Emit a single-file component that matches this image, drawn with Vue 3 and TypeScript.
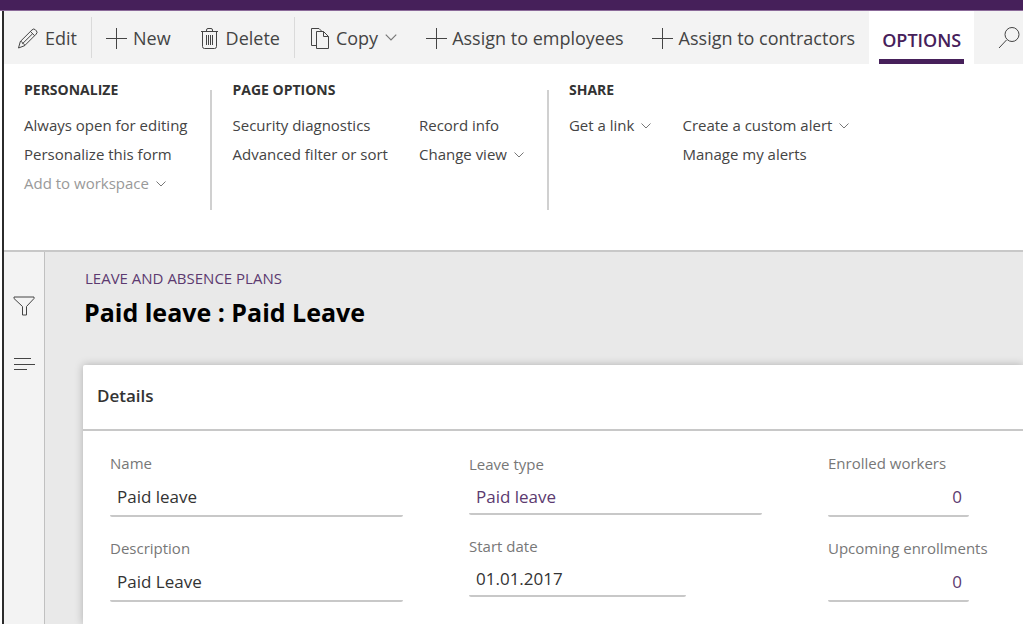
<script setup lang="ts">
import { ref } from 'vue'

interface OptionItem {
  label: string
  menu?: boolean
  disabled?: boolean
}

interface OptionGroup {
  title: string
  key: string
  columns: OptionItem[][]
}

interface Field {
  id: string
  label: string
  value: string
  size: 'full' | 'date' | 'count'
  accent?: boolean
}

interface FieldColumn {
  compact?: boolean
  fields: Field[]
}

const groups: OptionGroup[] = [
  {
    title: 'PERSONALIZE',
    key: 'personalize',
    columns: [
      [
        { label: 'Always open for editing' },
        { label: 'Personalize this form' },
        { label: 'Add to workspace', menu: true, disabled: true },
      ],
    ],
  },
  {
    title: 'PAGE OPTIONS',
    key: 'page',
    columns: [
      [{ label: 'Security diagnostics' }, { label: 'Advanced filter or sort' }],
      [{ label: 'Record info' }, { label: 'Change view', menu: true }],
    ],
  },
  {
    title: 'SHARE',
    key: 'share',
    columns: [
      [{ label: 'Get a link', menu: true }],
      [{ label: 'Create a custom alert', menu: true }, { label: 'Manage my alerts' }],
    ],
  },
]

const fieldColumns = ref<FieldColumn[]>([
  {
    fields: [
      { id: 'name', label: 'Name', value: 'Paid leave', size: 'full' },
      { id: 'description', label: 'Description', value: 'Paid Leave', size: 'full' },
    ],
  },
  {
    compact: true,
    fields: [
      { id: 'leave-type', label: 'Leave type', value: 'Paid leave', size: 'full', accent: true },
      { id: 'start-date', label: 'Start date', value: '01.01.2017', size: 'date' },
    ],
  },
  {
    fields: [
      { id: 'enrolled', label: 'Enrolled workers', value: '0', size: 'count', accent: true },
      { id: 'upcoming', label: 'Upcoming enrollments', value: '0', size: 'count', accent: true },
    ],
  },
])
</script>

<template>
  <div class="app">
    <div class="topbar"></div>
    <div class="window">
      <nav class="toolbar" aria-label="Actions">
        <button type="button" class="action">
          <svg class="icon" viewBox="0 0 20 20">
            <path d="M.5 20l1.800-6.500L14 1.900a2.400 2.400 0 0 1 3.500 0l.7.7a2.400 2.400 0 0 1 0 3.500L6.600 17.700z" />
            <path d="M12.400 3.500l4.200 4.200M14.600 5.700L4.700 15.500M2.300 13.500c1.600 0 2.300.6 2.300 2 1.300 0 2 .7 2 2.200" />
          </svg>
          <span>Edit</span>
        </button>
        <i class="divider"></i>
        <button type="button" class="action">
          <svg class="icon" viewBox="0 0 20 20"><path d="M10.500 0v21M0 10.500h21" /></svg>
          <span>New</span>
        </button>
        <button type="button" class="action">
          <svg class="icon" viewBox="0 0 20 20">
            <path d="M2 3.500h17M7.500 3.500v-1.500q0-1.500 1.500-1.500h3q1.500 0 1.500 1.500v1.500M3.500 3.500v15q0 2 2 2h10q2 0 2-2v-15M7.500 7v10M9.500 7v10M11.500 7v10M13.500 7v10" />
          </svg>
          <span>Delete</span>
        </button>
        <i class="divider"></i>
        <button type="button" class="action">
          <svg class="icon" viewBox="0 0 20 20">
            <path d="M7.500 17.500h-5v-17h7.500l3.500 3.500M7.500 3.500h7l5 5v12h-12zM14.500 3.500v5h5" />
          </svg>
          <span>Copy</span>
          <svg class="chevron" viewBox="0 0 10 6"><path d="M.5.500L5 5 9.500.500" /></svg>
        </button>
        <button type="button" class="action">
          <svg class="icon" viewBox="0 0 20 20"><path d="M11.500 0v21M1 10.500h21" /></svg>
          <span>Assign to employees</span>
        </button>
        <button type="button" class="action">
          <svg class="icon" viewBox="0 0 20 20"><path d="M10.500 0v21M0 10.500h21" /></svg>
          <span>Assign to contractors</span>
        </button>
        <button type="button" class="tab"><span>OPTIONS</span></button>
        <button type="button" class="search" aria-label="Search">
          <svg viewBox="0 0 22 22"><path d="M1 21l7.500-8" /><circle cx="14" cy="7.500" r="7" /></svg>
        </button>
      </nav>

      <section class="options">
        <div v-for="group in groups" :key="group.key" class="group">
          <h2>{{ group.title }}</h2>
          <div class="group-columns">
            <div v-for="(column, i) in group.columns" :key="i" class="group-column">
              <button
                v-for="item in column"
                :key="item.label"
                type="button"
                class="option"
                :disabled="item.disabled"
              >
                {{ item.label }}
                <svg v-if="item.menu" class="chevron" viewBox="0 0 10 6"><path d="M.5.500L5 5 9.500.500" /></svg>
              </button>
            </div>
          </div>
        </div>
      </section>

      <div class="body">
        <aside class="rail">
          <button type="button" aria-label="Filter">
            <svg viewBox="0 0 22 20"><path d="M1 1h20v1.500l-7.500 8v8.500h-4v-8.500L1 2.500z" /></svg>
          </button>
          <button type="button" aria-label="Related information">
            <svg viewBox="0 0 22 20"><path d="M1 4.500h17M1 10.500h21M1 15.500h13" /></svg>
          </button>
        </aside>
        <main class="content">
          <p class="crumb">LEAVE AND ABSENCE PLANS</p>
          <h1>Paid leave : Paid Leave</h1>
          <section class="card">
            <h3>Details</h3>
            <form class="fields" @submit.prevent>
              <div
                v-for="(column, i) in fieldColumns"
                :key="i"
                class="field-column"
                :class="{ compact: column.compact }"
              >
                <div v-for="field in column.fields" :key="field.id" class="field" :class="field.size">
                  <label :for="field.id">{{ field.label }}</label>
                  <input :id="field.id" v-model="field.value" type="text" :class="{ accent: field.accent }" />
                </div>
              </div>
            </form>
          </section>
        </main>
      </div>
    </div>
  </div>
</template>

<style>
body {
  margin: 0;
  overflow: hidden;
}
</style>

<style scoped>
.app {
  display: flex;
  flex-direction: column;
  min-height: 100vh;
  overflow: hidden;
  background: #fff;
  color: #333;
  font-family: "Segoe UI", "Open Sans", "Noto Sans", sans-serif;
}

button {
  flex: none;
  padding: 0;
  border: 0;
  background: none;
  color: inherit;
  font: inherit;
  white-space: nowrap;
}

svg {
  flex: none;
  overflow: visible;
  fill: none;
  stroke: #444;
  stroke-width: 1;
}

.topbar {
  height: 10px;
  background: #46205a;
  border-bottom: 1px solid #8b6a99;
}

.window {
  flex: 1;
  display: flex;
  flex-direction: column;
  margin-left: 2px;
  border-left: 2px solid #2b2b2b;
}

.toolbar {
  display: flex;
  height: 53px;
  background: #f3f3f3;
  color: #444;
  font-size: 18px;
}

.action {
  display: flex;
  align-items: center;
  gap: 7px;
  padding: 0 14px;
}

.icon {
  width: 20px;
  height: 20px;
}

.chevron {
  width: 10px;
  height: 6px;
  stroke: #777;
}

.action .chevron {
  width: 12px;
  height: 7px;
}

.divider {
  flex: none;
  width: 1px;
  margin: 6px 0;
  background: #dadada;
}

.tab {
  display: flex;
  padding: 0 10px;
  background: #fff;
  color: #46205a;
  font-weight: 600;
}

.tab span {
  box-sizing: border-box;
  height: 100%;
  padding: 4px 3px 0;
  border-bottom: 5px solid #46205a;
  line-height: 50px;
}

.search {
  margin-left: 24px;
}

.search svg {
  display: block;
  width: 22px;
  height: 22px;
}

.options {
  display: flex;
  height: 186px;
  border-bottom: 2px solid #c8c8c8;
}

.group {
  height: 120px;
  margin-top: 26px;
  padding: 0 23px 0 20px;
  border-right: 2px solid #d0d0d0;
}

.group:last-child {
  border-right: 0;
}

.group h2 {
  margin: -12px 0 9px;
  font-size: 14px;
  line-height: 24px;
  font-weight: 700;
}

.group-columns {
  display: flex;
  gap: 31px;
}

.group-column {
  display: flex;
  flex-direction: column;
  align-items: flex-start;
}

.option {
  display: flex;
  align-items: center;
  gap: 7px;
  color: #444;
  font-size: 15px;
  line-height: 29px;
}

.option:disabled {
  color: #999;
}

.body {
  flex: 1;
  display: flex;
}

.rail {
  flex: none;
  display: flex;
  flex-direction: column;
  align-items: center;
  gap: 38px;
  width: 40px;
  padding-top: 44px;
  background: #f3f3f3;
  border-right: 1px solid #c0c0c0;
}

.rail svg {
  display: block;
  width: 22px;
  height: 20px;
}

.content {
  flex: 1;
  min-width: 0;
  display: flex;
  flex-direction: column;
  padding: 14px 0 0 38px;
  background: #e9e9e9;
}

.crumb {
  margin: 0 2px;
  color: #5c3a70;
  font-size: 15px;
  line-height: 24px;
}

h1 {
  margin: 5px 1px 35px;
  color: #000;
  font-size: 25px;
  line-height: 35px;
  font-weight: 700;
}

.card {
  flex: 1;
  background: #fff;
  border-radius: 2px 0 0;
  box-shadow: 0 0 8px rgba(0, 0, 0, 0.25);
}

h3 {
  margin: 0;
  padding: 0 14px 2px;
  border-bottom: 2px solid #c8c8c8;
  font-size: 17px;
  line-height: 62px;
  font-weight: 600;
}

.fields {
  display: grid;
  grid-template-columns: repeat(3, 293px);
  gap: 66px;
  padding: 20px 27px 0;
}

.field-column {
  display: flex;
  flex-direction: column;
  gap: 19px;
}

.field {
  display: flex;
  flex-direction: column;
}

label {
  color: #777;
  font-size: 15px;
  line-height: 24px;
}

input {
  box-sizing: border-box;
  width: 100%;
  height: 42px;
  padding: 3px 7px 0;
  border: 0;
  border-bottom: 2px solid #c8c8c8;
  border-radius: 2px;
  background: none;
  color: #333;
  font: inherit;
  font-size: 17px;
}

.compact {
  padding-top: 1px;
}

.compact input {
  height: 39px;
}

.date input {
  width: 217px;
}

.count input {
  width: 141px;
  text-align: right;
}

input.accent {
  color: #5c3a70;
}
</style>
